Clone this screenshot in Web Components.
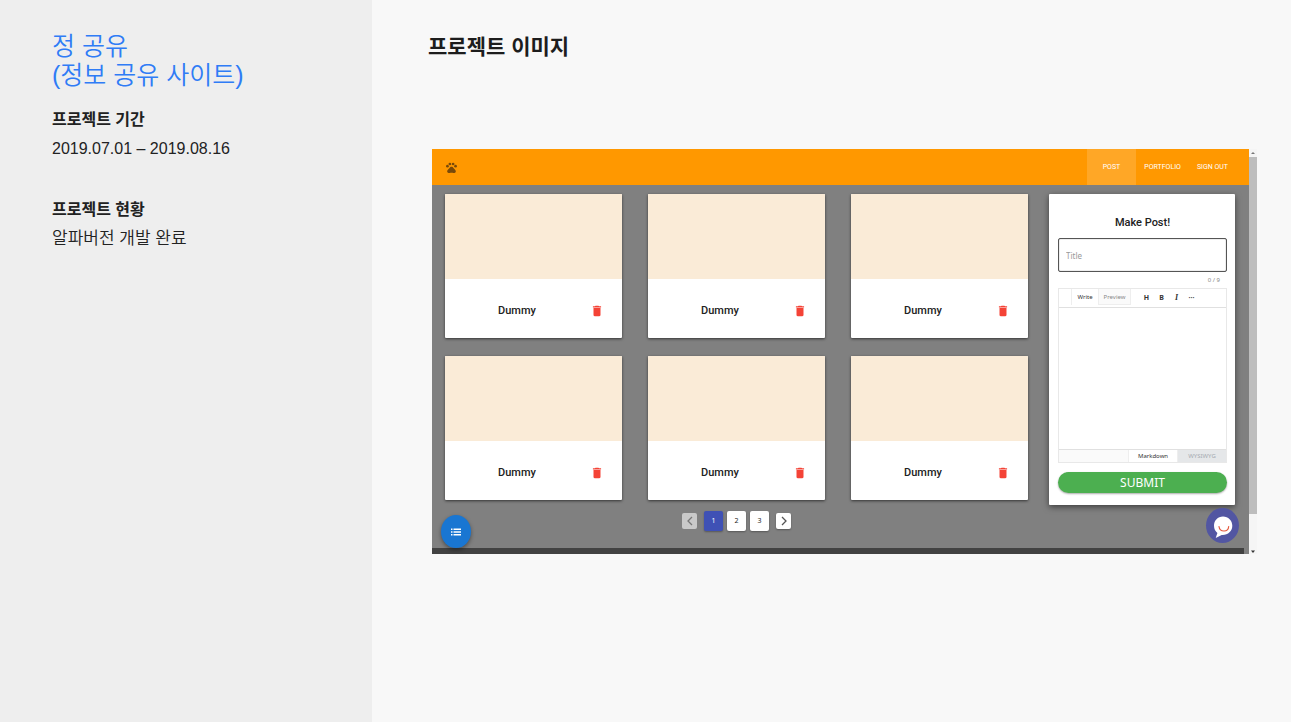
<!DOCTYPE html>
<html lang="ko">
<head>
<meta charset="utf-8">
<meta name="viewport" content="width=device-width, initial-scale=1">
<title>프로젝트 이미지</title>
<style>
  body { margin: 0; background: #f8f8f8; color: #212121; font-family: "Liberation Sans", "Noto Sans CJK KR", sans-serif; }
</style>
</head>
<body>
<project-page>
  <project-info slot="info" heading="정 공유" subheading="(정보 공유 사이트)">
    <info-item label="프로젝트 기간">2019.07.01 – 2019.08.16</info-item>
    <info-item class="status" label="프로젝트 현황">알파버전 개발 완료</info-item>
  </project-info>
  <app-window>
    <app-header slot="header"></app-header>
    <post-card>Dummy</post-card>
    <post-card>Dummy</post-card>
    <post-card>Dummy</post-card>
    <post-card>Dummy</post-card>
    <post-card>Dummy</post-card>
    <post-card>Dummy</post-card>
    <page-nav slot="pages"></page-nav>
    <post-form slot="form"></post-form>
  </app-window>
</project-page>
<script>
const define = (name, html) => customElements.define(name, class extends HTMLElement {
  constructor() {
    super();
    this.attachShadow({ mode: "open" }).innerHTML =
      `<style>*{box-sizing:border-box} button{border:0;padding:0;margin:0;cursor:pointer}</style>` +
      (typeof html === "function" ? html(this) : html);
  }
});

define("project-page", `
<style>
  :host { display: grid; grid-template-columns: 372px minmax(0, 1fr); min-height: 100vh; }
  aside { background: #eee; padding: 32px 52px; }
  main { padding: 30px 34px 30px 60px; }
  h1 { margin: 0 0 89px -4px; font: 700 21px/30px "Noto Sans CJK KR", sans-serif; color: #1d1d1d; }
</style>
<aside><slot name="info"></slot></aside>
<main><h1>프로젝트 이미지</h1><slot></slot></main>`);

define("project-info", el => `
<style>
  :host { display: block; }
  h2 { margin: 0 0 15px; font: 350 25px/29px "Liberation Sans", "Noto Sans CJK KR", sans-serif; color: #2f7cf6; white-space: nowrap; }
</style>
<h2>${el.getAttribute("heading")}<br>${el.getAttribute("subheading")}</h2>
<slot></slot>`);

define("info-item", el => `
<style>
  :host { display: block; margin-bottom: 28px; }
  h3 { margin: 0; font: 700 16px/26px "Noto Sans CJK KR", sans-serif; }
  p { margin: 0; font: 350 16px/36px "Liberation Sans", "Noto Sans CJK KR", sans-serif; color: #222; }
  :host(.status) p { font-size: 17px; }
</style>
<h3>${el.getAttribute("label")}</h3><p><slot></slot></p>`);

define("app-window", `
<style>
  :host { display: grid; grid-template-columns: minmax(0, 1fr) 8px; }
  .app { position: relative; background: #808080; }
  .body { display: grid; grid-template-columns: minmax(0, 1fr) 186px; gap: 21px; padding: 9px 14px 0 13px; align-items: start; }
  .cards { display: grid; grid-template-columns: repeat(3, minmax(0, 1fr)); gap: 18px 26px; }
  footer { height: 6px; margin-right: 5px; background: #424242; }
  .left { height: 354px; }
  .fab, .chat { position: absolute; display: grid; place-items: center; border-radius: 50%; }
  .fab { left: 9px; bottom: 6px; width: 30px; height: 33px; background: #1976d2; box-shadow: 0 2px 4px #0006; }
  .chat { right: 10px; bottom: 11px; width: 33px; height: 35px; background: #5256a2; }
  .scroll { display: grid; grid-template-rows: 8px 357px 1fr; background: #f5f5f5; justify-items: center; }
  .thumb { width: 100%; background: #bdbdbd; }
  .scroll svg:last-child { align-self: end; }
</style>
<div class="app">
  <slot name="header"></slot>
  <div class="body">
    <div class="left"><div class="cards"><slot></slot></div><slot name="pages"></slot></div>
    <slot name="form"></slot>
  </div>
  <footer></footer>
  <button class="fab" aria-label="List"><svg width="12" height="12" viewBox="0 0 24 24" fill="#fff"><path d="M2 5h3v3H2zm0 5.500h3v3H2zM2 16h3v3H2zM7 5h15v3H7zm0 5.500h15v3H7zM7 16h15v3H7z"/></svg></button>
  <button class="chat" aria-label="Chat"><svg width="22" height="26" viewBox="0 0 22 26"><path fill="#fff" d="M11 3.500C5.800 3.500 2 7.500 2 12.800c0 3.300 1.400 5.600 3.400 7.200L3.700 25l6-3c5.900.5 10.600-3.700 10.600-9.200C20.300 7.500 16.200 3.500 11 3.500z"/><path fill="none" stroke="#e5593d" stroke-width="1.200" stroke-linecap="round" d="M7 13.500c.3 2.600 2.400 4.500 5 4.500s4.500-1.900 4.700-4.500"/></svg></button>
</div>
<div class="scroll" aria-hidden="true">
  <svg width="8" height="8" viewBox="0 0 8 8"><path fill="#777" d="M4 3 6 5H2z"/></svg>
  <div class="thumb"></div>
  <svg width="8" height="5" viewBox="0 0 8 5"><path fill="#333" d="M4 4 2 1.500h4z"/></svg>
</div>`);

define("app-header", `
<style>
  :host { display: flex; justify-content: space-between; align-items: center; height: 36px; padding: 0 13px; background: #ff9800; }
  .home { display: flex; }
  nav { display: flex; height: 100%; }
  nav a { display: grid; place-items: center; padding: 0 8px; font: 400 7px/10px Roboto, sans-serif; color: #fff; text-decoration: none; }
  nav a.active { padding: 0 16px; background: #ffa726; }
</style>
<a class="home" href="#" aria-label="Home"><svg width="13" height="13" viewBox="0 0 24 24" fill="#77490a"><circle cx="4.500" cy="9.500" r="2.500"/><circle cx="9" cy="5.500" r="2.500"/><circle cx="15" cy="5.500" r="2.500"/><circle cx="19.500" cy="9.500" r="2.500"/><path d="M17.340 14.860c-.87-1.020-1.600-1.890-2.480-2.910-.46-.54-1.050-1.080-1.750-1.320-.84-.21-1.380-.21-2.220 0-.7.240-1.280.78-1.750 1.320-.87 1.020-1.600 1.890-2.480 2.910-1.310 1.310-2.920 2.760-2.620 4.790.29 1.020 1.020 2.030 2.330 2.320.73.150 3.060-.44 5.540-.44h.18c2.480 0 4.810.58 5.540.44 1.310-.29 2.040-1.310 2.330-2.320.31-2.040-1.300-3.490-2.610-4.800z"/></svg></a>
<nav><a class="active" href="#">POST</a><a href="#">PORTFOLIO</a><a href="#">SIGN OUT</a></nav>`);

define("post-card", `
<style>
  :host { display: block; background: #fff; border-radius: 1px; box-shadow: 0 1px 3px #0009; overflow: hidden; }
  .media { height: 85px; background: #faebd7; }
  .row { display: grid; grid-template-columns: minmax(0, 1fr) 16px; padding: 5px 17px 0 0; height: 59px; align-items: center; }
  h4 { margin: 0; text-align: center; font: 500 11px/18px Roboto, sans-serif; }
  button { display: grid; place-items: center; background: none; height: 16px; }
</style>
<div class="media"></div>
<div class="row"><h4><slot></slot></h4><button aria-label="Delete"><svg width="14" height="14" viewBox="0 0 24 24" fill="#f44336"><path d="M6 19c0 1.100.9 2 2 2h8c1.100 0 2-.9 2-2V7H6v12zM19 4h-3.500l-1-1h-5l-1 1H5v2h14V4z"/></svg></button></div>`);

define("page-nav", `
<style>
  :host { display: flex; justify-content: center; align-items: center; gap: 4px; margin-top: 11px; }
  button { width: 19px; height: 20px; border-radius: 2px; background: #fff; box-shadow: 0 1px 2px #0005; font: 400 7px/10px "Noto Sans", sans-serif; color: #222; }
  .on { background: #3f51b5; color: #fff; }
  .step { display: grid; place-items: center; width: 15px; height: 16px; }
  .prev { margin-right: 3px; background: #c9c9c9; box-shadow: none; }
  .next { margin-left: 3px; }
</style>
<button class="step prev" aria-label="Previous"><svg width="8" height="10" viewBox="0 0 8 10" fill="none" stroke="#777" stroke-width="1.300"><path d="M6 1 2 5l4 4"/></svg></button>
<button class="on">1</button><button>2</button><button>3</button>
<button class="step next" aria-label="Next"><svg width="8" height="10" viewBox="0 0 8 10" fill="none" stroke="#555" stroke-width="1.300"><path d="M2 1l4 4-4 4"/></svg></button>`);

define("post-form", `
<style>
  :host { display: block; padding: 20px 8px 12px 9px; background: #fff; border-radius: 1px; box-shadow: 0 2px 6px #0008; }
  h3 { margin: 0 0 6px; text-align: center; font: 500 11px/18px Roboto, sans-serif; }
  input { display: block; width: 100%; height: 34px; margin: 0; padding: 0 7px; border: 1px solid #555; outline: 0; border-radius: 2px; box-shadow: inset 0 0 1px #555; background: #fff; font: 400 8px/12px "Noto Sans", sans-serif; }
  input::placeholder { color: #999; }
  .count { padding: 3px 7px 0 0; height: 16px; text-align: right; font: 400 6px/10px "Noto Sans", sans-serif; color: #888; }
  .editor { border: 1px solid #e8e8e8; }
  .editor button { background: none; font: 400 6px/8px "Noto Sans", sans-serif; color: #333; }
  .tools { display: flex; height: 19px; padding-left: 12px; border-bottom: 1px solid #e0e0e0; }
  .tools .tab { width: 27px; height: 16px; border-left: 1px solid #eee; }
  .tools .off { width: 33px; border: 1px solid #eee; border-top: 0; background: #fafafa; color: #888; }
  .tools .mark { width: 15px; font: 700 7px/18px "Noto Sans", sans-serif; }
  .tools .i { font-family: "Liberation Serif", serif; font-style: italic; font-size: 8px; }
  .tools .first { margin-left: 8px; }
  textarea { display: block; width: 100%; height: 141px; border: 0; padding: 4px; outline: 0; resize: none; background: #fff; font: 400 8px/12px "Noto Sans", sans-serif; }
  .modes { display: flex; justify-content: flex-end; height: 13px; border-top: 1px solid #e0e0e0; background: #fafafa; }
  .modes button { width: 49px; background: #fff; border-left: 1px solid #eee; }
  .modes .off { background: #e5e7e9; color: #a5abb1; }
  .submit { display: block; width: 100%; height: 21px; margin-top: 9px; border-radius: 11px; background: #4caf50; box-shadow: 0 1px 2px #0005; color: #fff; font: 400 12px/18px "Noto Sans", sans-serif; }
</style>
<h3>Make Post!</h3>
<input aria-label="Title" placeholder="Title" maxlength="9">
<div class="count">0 / 9</div>
<div class="editor">
  <div class="tools"><button class="tab">Write</button><button class="tab off">Preview</button><button class="mark first">H</button><button class="mark">B</button><button class="mark i">I</button><button class="mark">···</button></div>
  <textarea aria-label="Content"></textarea>
  <div class="modes"><button>Markdown</button><button class="off">WYSIWYG</button></div>
</div>
<button class="submit">SUBMIT</button>`);
</script>
</body>
</html>
